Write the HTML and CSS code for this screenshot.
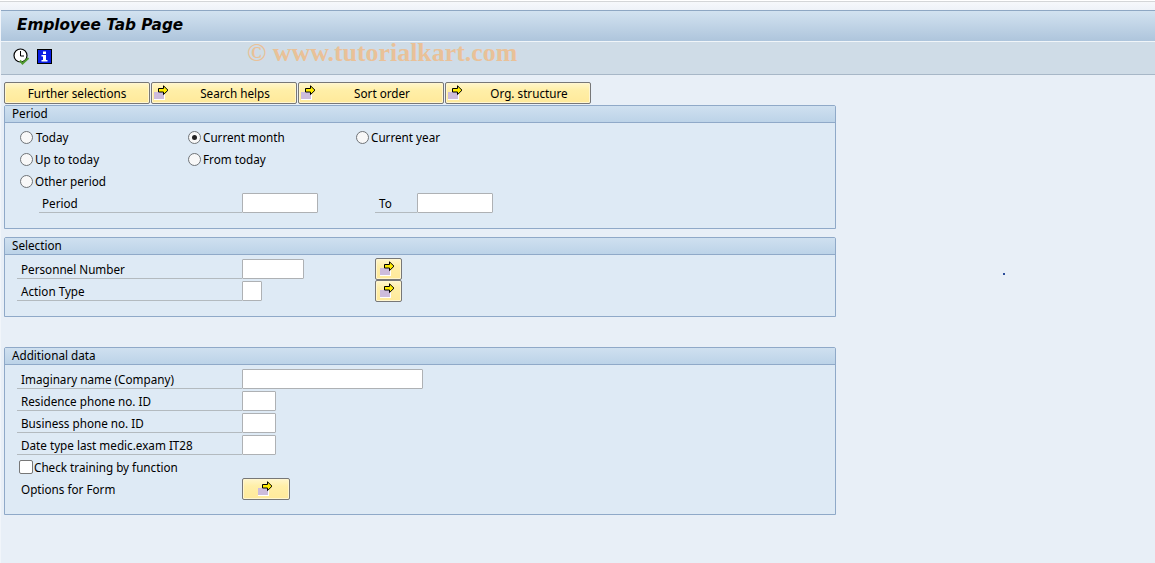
FILE: index.html
```html
<!DOCTYPE html>
<html lang="en">
<head>
<meta charset="utf-8">
<title>Employee Tab Page</title>
<link rel="stylesheet" href="styles.css">
</head>
<body>
<svg class="defs" width="0" height="0" aria-hidden="true">
  <symbol id="choose" viewBox="0 0 16 16">
    <rect x="0" y="7" width="11" height="8" fill="#fff"/>
    <rect x="0" y="7" width="10" height="7" fill="#cdbcdc"/>
    <path d="M4.5 3.5H9.5V0.8L14 5.2L9.5 9.6V7H4.5Z" fill="#ffec00" stroke="#000" stroke-width="1"/>
  </symbol>
</svg>
<div class="page">
  <div class="topstrip"></div>
  <header class="titlebar"><h1 class="title">Employee Tab Page</h1></header>
  <div class="toolbar">
    <svg class="tool-clock" width="17" height="17" viewBox="0 0 17 17">
      <circle cx="7.5" cy="7.5" r="6.5" fill="#fff" stroke="#000" stroke-width="1.2"/>
      <path d="M7.5 3V8H11" fill="none" stroke="#000" stroke-width="1"/>
      <path d="M7 12.5L9.5 15.5L15.5 10" fill="none" stroke="#4f9a2f" stroke-width="2"/>
    </svg>
    <svg class="tool-info" width="15" height="15" viewBox="0 0 15 15">
      <rect x="0.5" y="0.5" width="14" height="14" fill="#0a1ee6" stroke="#000"/>
      <rect x="6" y="2.5" width="3" height="2.5" fill="#fff"/>
      <path d="M4.5 6H9V11H10.5V12.5H4.5V11H6V7.5H4.5Z" fill="#fff"/>
    </svg>
    <span class="watermark">© www.tutorialkart.com</span>
  </div>
  <main class="content">
    <div class="tabs">
      <button class="tab tab-plain">Further selections</button>
      <button class="tab"><svg class="ico"><use href="#choose"/></svg><span class="tab-text">Search helps</span></button>
      <button class="tab"><svg class="ico"><use href="#choose"/></svg><span class="tab-text">Sort order</span></button>
      <button class="tab"><svg class="ico"><use href="#choose"/></svg><span class="tab-text">Org. structure</span></button>
    </div>

    <section class="group">
      <div class="group-head">Period</div>
      <div class="group-body">
        <div class="row">
          <div class="opt"><span class="radio"></span><span class="opt-text">Today</span></div>
          <div class="opt"><span class="radio radio-on"></span><span>Current month</span></div>
          <div class="opt"><span class="radio"></span><span>Current year</span></div>
        </div>
        <div class="row">
          <div class="opt"><span class="radio"></span><span>Up to today</span></div>
          <div class="opt"><span class="radio"></span><span>From today</span></div>
        </div>
        <div class="row">
          <div class="opt"><span class="radio"></span><span>Other period</span></div>
        </div>
        <div class="row">
          <label class="label label-sub">Period</label><span class="field w76"></span>
          <label class="label label-to">To</label><span class="field w76"></span>
        </div>
      </div>
    </section>

    <section class="group group-sel">
      <div class="group-head">Selection</div>
      <div class="group-body">
        <div class="row">
          <label class="label">Personnel Number</label><span class="field w62"></span>
          <button class="icobtn"><svg class="ico"><use href="#choose"/></svg></button>
        </div>
        <div class="row">
          <label class="label">Action Type</label><span class="field w20"></span>
          <button class="icobtn icobtn-short"><svg class="ico"><use href="#choose"/></svg></button>
        </div>
      </div>
    </section>

    <section class="group group-add">
      <div class="group-head">Additional data</div>
      <div class="group-body">
        <div class="row"><label class="label">Imaginary name (Company)</label><span class="field w181"></span></div>
        <div class="row"><label class="label">Residence phone no. ID</label><span class="field w34"></span></div>
        <div class="row"><label class="label">Business phone no. ID</label><span class="field w34"></span></div>
        <div class="row"><label class="label">Date type last medic.exam IT28</label><span class="field w34"></span></div>
        <div class="row row-mid"><span class="check"></span><span>Check training by function</span></div>
        <div class="row row-mid">
          <span class="plain">Options for Form</span>
          <button class="widebtn"><svg class="ico"><use href="#choose"/></svg></button>
        </div>
      </div>
    </section>
    <span class="speck"></span>
  </main>
</div>
</body>
</html>
```
FILE: styles.css
```css
* { box-sizing: border-box; }
html, body { margin: 0; height: 100%; }
body {
  background: #f1f5fa;
  font-family: "Noto Sans", sans-serif;
  font-size: 11.7px;
  color: #000;
  overflow: hidden;
}
.defs { position: absolute; }
.page { margin-left: 1px; height: 563px; display: flex; flex-direction: column; background: #e8eff7; }
.topstrip {
  height: 10px;
  margin-left: -1px;
  background: linear-gradient(#fff 0, #fff 1px, #d4d6d8 1px, #d4d6d8 2px, #f6f8fb 2px, #eef2f8 10px);
}
.titlebar {
  height: 32px;
  border-top: 1px solid #8ea7c3;
  border-bottom: 1px solid #f0f5f9;
  background: linear-gradient(#d2e2f0, #aec5dc);
  display: flex;
  align-items: center;
  padding-left: 16px;
}
.title { margin: 0; font: italic bold 15.3px "DejaVu Sans", sans-serif; color: #000; position: relative; top: -1px; }
.toolbar {
  height: 33px;
  background: #cfdce7;
  border-bottom: 1px solid #a7b7c7;
  position: relative;
  display: flex;
  align-items: center;
  padding: 0 0 3px 12px;
}
.tool-clock { margin-right: 7px; }
.watermark {
  position: absolute;
  left: 246px;
  top: -4px;
  font: bold 25.9px "Liberation Serif", serif;
  color: #e9c198;
  white-space: nowrap;
}
.content { padding: 7px 0 0 3px; position: relative; flex: 1; }
.tabs { display: flex; gap: 1px; margin-bottom: 1px; }
button {
  font: inherit;
  color: inherit;
  margin: 0;
  padding: 0;
  background: linear-gradient(#fff6cc, #ffefa8 35%, #ffe99a 100%);
  border: 1px solid #777;
  border-radius: 2px;
  box-shadow: inset 0 0 0 1px #fff6d0;
  position: relative;
}
.tab { width: 146px; height: 22px; padding-left: 22px; display: block; }
.tab-plain { padding-left: 0; }
.tab-text { display: block; text-align: center; }
.ico { width: 16px; height: 16px; display: block; }
.tab .ico { position: absolute; left: 2px; top: 2px; }
.group { width: 832px; border: 1px solid #8fa9c8; border-radius: 2px 2px 0 0; background: #deeaf5; }
.group-sel { margin-top: 8px; }
.group-add { margin-top: 30px; }
.group-head {
  height: 17px;
  line-height: 15px;
  padding-left: 7px;
  background: linear-gradient(#cfe0f0, #bcd3e8);
  border-bottom: 1px solid #8fa9c8;
}
.group-body { padding: 4px 0 13px 0; }
.row { display: flex; height: 22px; align-items: flex-start; }
.row-mid { align-items: center; }
.opt { width: 168px; height: 20px; display: flex; align-items: center; line-height: 18px; }
.opt span:last-child { padding-bottom: 1px; }
.opt .radio { padding-bottom: 0; }
.opt:first-child { margin-left: 15px; }
.opt-text { margin-left: 1px; }
.radio {
  width: 13px;
  height: 13px;
  border-radius: 50%;
  border: 1px solid #6f7478;
  background: #f8f8f8;
  margin-right: 2px;
  flex: none;
  display: flex;
  align-items: center;
  justify-content: center;
}
.radio-on::after { content: ""; width: 5px; height: 5px; border-radius: 50%; background: #222; }
.label {
  display: block;
  width: 225px;
  height: 20px;
  line-height: 21px;
  margin-left: 12px;
  padding-left: 4px;
  border-bottom: 1px solid #b3babf;
  white-space: nowrap;
}
.label-sub { width: 203px; margin-left: 34px; padding-left: 3px; }
.label-to { width: 42px; margin-left: 57px; padding-left: 4px; }
.field { display: block; height: 20px; background: #fff; border: 1px solid #aeb1b4; border-radius: 1px; flex: none; }
.w76 { width: 76px; }
.w62 { width: 62px; }
.w20 { width: 20px; }
.w181 { width: 181px; }
.w34 { width: 34px; }
.icobtn { width: 27px; height: 22px; margin-left: 71px; margin-top: -1px; flex: none; }
.icobtn-short { margin-left: 113px; }
.icobtn .ico { position: absolute; left: 4px; top: 2px; }
.check {
  width: 14px;
  height: 14px;
  margin-left: 14px;
  margin-right: 1px;
  margin-top: -2px;
  background: #fff;
  border: 1px solid #777;
  border-radius: 2px;
  flex: none;
}
.row-mid span { position: relative; top: -1px; }
.row-mid .check { top: 0; }
.plain { width: 221px; margin-left: 16px; flex: none; }
.widebtn { width: 48px; height: 22px; margin-top: -2px; flex: none; }
.widebtn .ico { position: absolute; left: 15px; top: 2px; }
.speck { position: absolute; left: 1002px; top: 198px; width: 2px; height: 2px; background: #2a4c9a; }
```
